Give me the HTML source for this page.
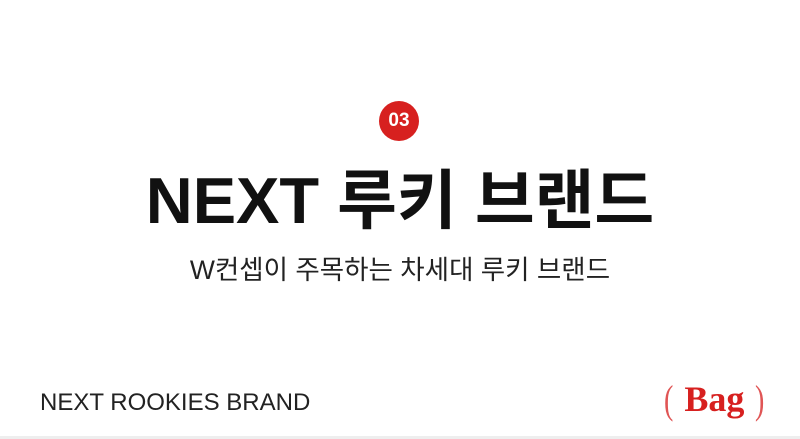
<!DOCTYPE html>
<html><head><meta charset="utf-8"><style>
body{margin:0;width:800px;height:439px;background:#fff;position:relative;overflow:hidden;font-family:"Liberation Sans","Noto Sans CJK KR",sans-serif;}
.c{position:absolute;left:379px;top:101px;width:40px;height:40px;border-radius:50%;background:#d7201f;color:#fff;font-weight:bold;font-size:19px;line-height:40px;text-align:center;}
.t{position:absolute;left:0;width:800px;text-align:center;top:161px;font-size:65px;font-weight:bold;line-height:80px;color:#111;}
.s{position:absolute;left:0;width:800px;text-align:center;top:252px;font-size:26.5px;line-height:36px;color:#222;}
.n{position:absolute;left:40px;top:388px;font-size:24px;line-height:30px;color:#222;}
.b{position:absolute;left:662px;top:377px;font-family:"Liberation Serif",serif;color:#d7201f;font-size:36px;line-height:44px;font-weight:bold;white-space:nowrap;}
.b span{font-weight:normal;font-size:40px;color:#e05555;display:inline-block;transform:scaleX(0.7);vertical-align:-2px;}
.l{position:absolute;left:0;top:436px;width:800px;height:3px;background:#eee;}
</style></head><body>
<div class="c">03</div>
<div class="t">NEXT 루키 브랜드</div>
<div class="s">W컨셉이 주목하는 차세대 루키 브랜드</div>
<div class="n">NEXT ROOKIES BRAND</div>
<div class="b"><span>(</span> Bag <span>)</span></div>
<div class="l"></div>
</body></html>
